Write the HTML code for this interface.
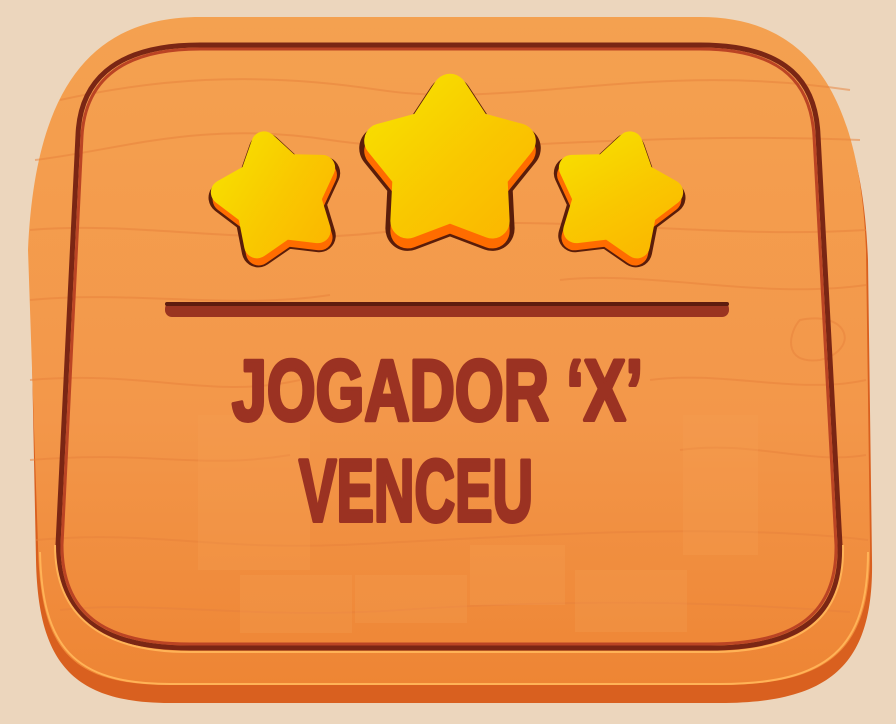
<!DOCTYPE html>
<html><head><meta charset="utf-8"><style>
html,body{margin:0;padding:0;background:#ecd6bd;width:896px;height:724px;overflow:hidden}
svg{display:block}
</style></head><body>
<svg width="896" height="724" viewBox="0 0 896 724" xmlns="http://www.w3.org/2000/svg">
<defs>
<linearGradient id="board" x1="0" y1="0" x2="0" y2="1">
<stop offset="0" stop-color="#f4a150"/><stop offset="0.6" stop-color="#f3974a"/><stop offset="1" stop-color="#ee8534"/>
</linearGradient>
<linearGradient id="sy" x1="0" y1="0" x2="1" y2="1">
<stop offset="0" stop-color="#f7e000"/><stop offset="0.55" stop-color="#f9c800"/><stop offset="1" stop-color="#fbb800"/>
</linearGradient>
<polygon id="sp" points="0,-58 20,-27.5 55.2,-17.9 32.3,10.5 34.1,46.9 0,34 -34.1,46.9 -32.3,10.5 -55.2,-17.9 -20,-27.5"/>
<g id="star">
<use href="#sp" fill="#5a1d0a" stroke="#5a1d0a" stroke-width="36" stroke-linejoin="round" transform="translate(0,6)"/>
<use href="#sp" fill="#ff6c00" stroke="#ff6c00" stroke-width="28" stroke-linejoin="round" transform="translate(0,8)"/>
<use href="#sp" fill="url(#sy)" stroke="url(#sy)" stroke-width="28" stroke-linejoin="round"/>
</g>
</defs>
<!-- board edge -->
<path d="M200,35 L700,35 C810,35 862,100 868,260 L872,560 C874,665 830,703 720,703 L170,703 C70,703 38,660 36,560 L30,260 C34,100 90,35 200,35 Z" fill="#d9601f"/>
<!-- board top -->
<path d="M200,17 L700,17 C806,17 860,90 866,250 L870,545 C872,650 830,685 720,685 L170,685 C70,685 40,650 38,545 L28,250 C35,90 90,17 200,17 Z" fill="url(#board)"/>
<path d="M170,684 L720,684 C828,684 868,648 868,552" fill="none" stroke="#ffb357" stroke-width="2"/>
<path d="M170,684 C72,684 42,645 40,552" fill="none" stroke="#ffb357" stroke-width="2"/>
<!-- grain -->
<g fill="none" stroke="#e8823c" stroke-width="2" opacity="0.5">
<path d="M60,100 C150,80 250,70 380,90 S650,60 850,90"/>
<path d="M35,160 C120,150 200,120 330,140 S600,130 860,140"/>
<path d="M30,230 C150,220 260,250 400,230 S700,240 866,230"/>
<path d="M30,300 C130,290 230,310 330,295"/>
<path d="M560,280 C650,270 760,300 866,285"/>
<path d="M30,380 C150,370 210,400 300,380"/>
<path d="M650,380 C720,370 800,395 866,380"/>
<path d="M30,460 C150,450 200,470 290,455"/>
<path d="M680,450 C750,440 810,465 866,455"/>
<path d="M36,540 C150,530 210,550 340,545 S700,520 868,540"/>
<path d="M60,610 C150,600 250,620 400,610 S700,600 850,612"/>
<path d="M800,320 C850,310 860,350 820,360 C780,365 790,330 800,320 Z"/>
</g>
<!-- patches -->
<g fill="#f59f52" opacity="0.3">
<rect x="198" y="415" width="112" height="155"/>
<rect x="240" y="575" width="112" height="58"/>
<rect x="355" y="575" width="112" height="48"/>
<rect x="575" y="570" width="112" height="62"/>
<rect x="683" y="415" width="75" height="140"/>
<rect x="470" y="545" width="95" height="60"/>
</g>
<!-- groove -->
<path d="M200,45 L700,45 C790,45 816,85 818,135 L840,545 C842,615 800,648 710,648 L190,648 C100,648 58,615 58,545 L78,135 C80,85 110,45 200,45 Z" fill="none" stroke="#7a2614" stroke-width="5"/>
<path d="M200,49 L700,49 C786,49 811,87 814,136 L836,545 C837,612 798,644 710,644 L190,644 C102,644 62,612 62,545 L82,136 C85,87 114,49 200,49 Z" fill="none" stroke="#bb4424" stroke-width="3"/>
<path d="M190,652 L710,652 C805,652 845,615 843,545" fill="none" stroke="#ffb357" stroke-width="2"/>
<path d="M190,652 C100,652 55,615 55,545" fill="none" stroke="#ffb357" stroke-width="2"/>
<!-- stars -->
<use href="#star" transform="translate(277,196) rotate(-14) scale(0.92)"/>
<use href="#star" transform="translate(450,163) scale(1.24)"/>
<use href="#star" transform="translate(617,196) rotate(14) scale(0.92)"/>
<!-- divider -->
<rect x="165" y="302" width="564" height="15" rx="7" fill="#9a3420"/>
<rect x="165" y="302" width="564" height="4" rx="2" fill="#5e1c0e"/>
<!-- text -->
<g font-family="Liberation Sans, sans-serif" font-weight="bold" fill="#9b3222" stroke="#9b3222" stroke-width="4" stroke-linejoin="round">
<text x="232" y="420" font-size="86" textLength="411" lengthAdjust="spacingAndGlyphs">JOGADOR ‘X’</text>
<text x="299" y="521" font-size="88" textLength="234" lengthAdjust="spacingAndGlyphs">VENCEU</text>
</g>
</svg>
</body></html>
